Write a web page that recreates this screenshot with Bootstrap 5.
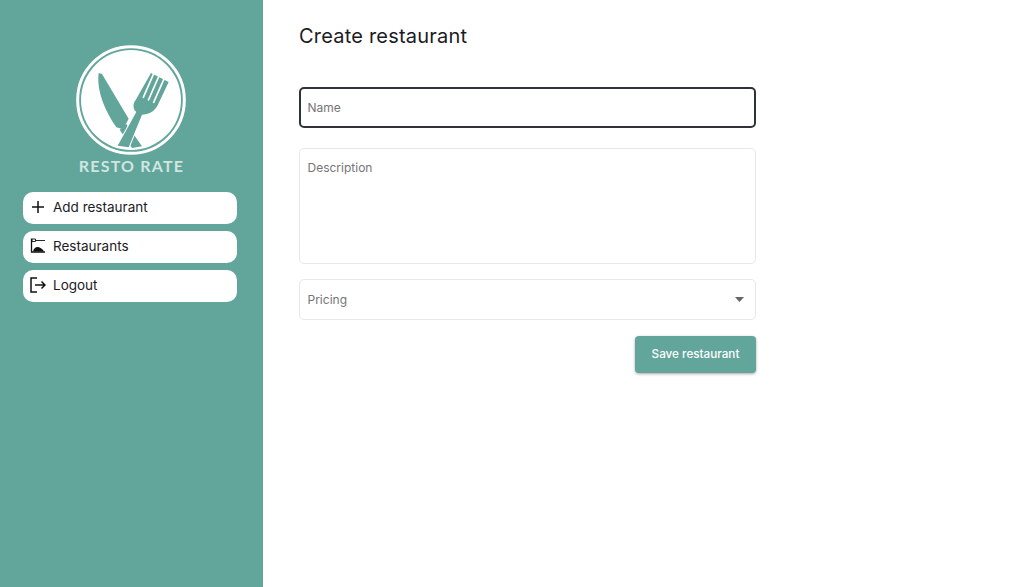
<!DOCTYPE html>
<html lang="en">
<head>
    <meta charset="UTF-8">
    <meta name="viewport" content="width=device-width, initial-scale=1.0">
    <title>Create restaurant</title>
    <link href="https://cdn.jsdelivr.net/npm/bootstrap@5.3.0/dist/css/bootstrap.min.css" rel="stylesheet">
    <style>
        body {
            font-family: "Inter", "Liberation Sans", sans-serif;
            color: #1c1b1f;
            background-color: #fff;
        }
        .app-shell {
            height: 587px;
            overflow: hidden;
        }
        .side-panel {
            width: 263px;
            background-color: #62a59b;
            padding: 45px 26px 0 23px;
        }
        .logo-svg {
            display: block;
            width: 110px;
            height: 110px;
            margin-left: 1px;
        }
        .logo-name {
            font-family: "Lato", sans-serif;
            font-size: 16px;
            line-height: 20px;
            letter-spacing: 1.2px;
            font-weight: 700;
            color: #cfe6e1;
            margin-top: 1px;
            margin-bottom: 16px;
            margin-left: 3px;
        }
        .side-btn {
            height: 32px;
            background-color: #fff;
            border-radius: 10px;
            font-size: 13.5px;
            color: #1c1b1f;
            text-decoration: none;
            padding-left: 7px;
            padding-bottom: 2px;
        }
        .side-btn svg {
            width: 16px;
            height: 16px;
            margin-right: 7px;
        }
        .side-list {
            gap: 7px;
        }
        .main-panel {
            padding: 0 0 0 36px;
        }
        .page-title {
            font-size: 20px;
            font-weight: 400;
            line-height: 28px;
            letter-spacing: .2px;
            margin: 22px 0 37px;
        }
        .form-box {
            width: 457px;
        }
        .form-box .form-control,
        .form-box .form-select {
            font-size: 12px;
            border: 1px solid #e8e8e8;
            border-radius: 5px;
            padding: 0 7.5px;
            height: 41px;
            color: #757575;
            box-shadow: none;
        }
        .form-box .form-control::placeholder {
            color: #757575;
            opacity: 1;
        }
        .form-box .name-input {
            border: 2px solid #2f3236;
            padding: 0 6.5px;
            margin-bottom: 20px;
        }
        .form-box textarea.form-control {
            height: 116px;
            padding-top: 10px;
            margin-bottom: 15px;
            resize: none;
        }
        .form-box .form-select {
            background-image: url("data:image/svg+xml,%3csvg xmlns='http://www.w3.org/2000/svg' viewBox='0 0 10 5'%3e%3cpath fill='%23666' d='M0 0h10L5 5z'/%3e%3c/svg%3e");
            background-size: 9px 4.5px;
            background-position: right 11px center;
            margin-bottom: 16px;
        }
        .save-btn {
            width: 121px;
            height: 37px;
            background-color: #62a59b;
            border: 0;
            border-radius: 4px;
            color: #fff;
            font-size: 11.7px;
            font-weight: 500;
            padding: 0;
            box-shadow: 0 1px 3px rgba(0,0,0,.35);
        }
    </style>
</head>
<body>
    <div class="app-shell d-flex">
        <aside class="side-panel flex-shrink-0">
            <div class="d-flex flex-column align-items-center">
                <svg class="logo-svg" viewBox="47 31 330 330" aria-hidden="true">
                    <circle cx="212" cy="196" r="160" fill="none" stroke="#fff" stroke-width="9"/>
                    <circle cx="212" cy="196" r="150" fill="#fff"/>
                    <path fill="#62a59b" d="M115 115 L125 118 L205 252 L192 278 L186 283 L168 278 C135 230 108 170 115 115Z"/>
                    <path fill="#62a59b" d="M198 268 L245 335 L215 340 L178 285Z"/>
                    <path fill="#62a59b" stroke="#fff" stroke-width="6" paint-order="stroke" d="M272 115 L325 142 L292 212 C282 232 262 240 245 240 L205 338 L172 333 L228 232 C216 222 218 205 226 196Z"/>
                    <path fill="none" stroke="#fff" stroke-width="5" stroke-linecap="round" d="M283 110 L249 188 M298.500 118 L264.500 195.500 M314 126 L280 203"/>
                </svg>
                <div class="logo-name">RESTO RATE</div>
            </div>
            <div class="side-list d-flex flex-column">
                <a href="#" class="side-btn d-flex align-items-center">
                    <svg viewBox="0 0 16 16"><path d="M8 2v12M2 8h12" fill="none" stroke="#111" stroke-width="1.5"/></svg>
                    Add restaurant
                </a>
                <a href="#" class="side-btn d-flex align-items-center">
                    <svg viewBox="0 0 16 16"><path d="M1.500 .5v14M1 14h14" fill="none" stroke="#111" stroke-width="1.300"/><path d="M2 1h3.500v2.500H2zM5.500 2.500H15" fill="none" stroke="#111" stroke-width=".9"/><path d="M3 13.500c.5-3 2.500-4.500 4.500-4.500s5 1.500 6.500 4.500z" fill="#111"/></svg>
                    Restaurants
                </a>
                <a href="#" class="side-btn d-flex align-items-center">
                    <svg viewBox="0 0 16 16"><path d="M7 1H1v14h6M5 8h10M11.500 4.500 15 8l-3.500 3.500" fill="none" stroke="#111" stroke-width="1.500"/></svg>
                    Logout
                </a>
            </div>
        </aside>
        <main class="main-panel flex-grow-1">
            <h1 class="page-title">Create restaurant</h1>
            <form class="form-box d-flex flex-column">
                <input type="text" class="form-control name-input" placeholder="Name">
                <textarea class="form-control" placeholder="Description"></textarea>
                <select class="form-select">
                    <option selected>Pricing</option>
                </select>
                <div class="d-flex justify-content-end">
                    <button type="button" class="btn save-btn">Save restaurant</button>
                </div>
            </form>
        </main>
    </div>
    <script src="https://cdn.jsdelivr.net/npm/bootstrap@5.3.0/dist/js/bootstrap.bundle.min.js"></script>
</body>
</html>
